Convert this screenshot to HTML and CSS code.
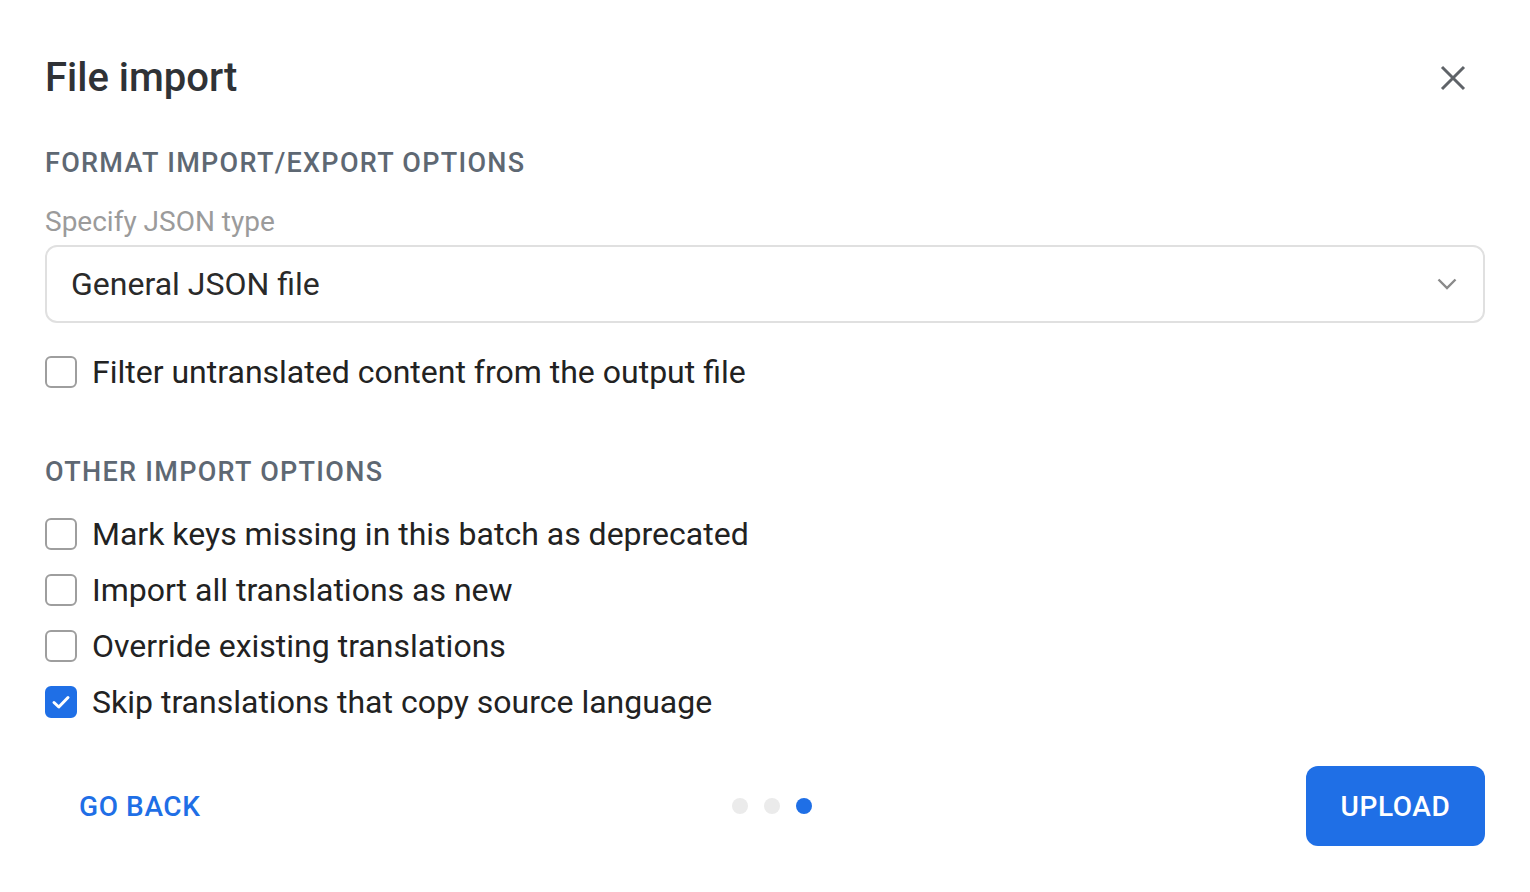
FILE: index.html
```html
<!DOCTYPE html>
<html lang="en">
<head>
<meta charset="utf-8">
<title>File import</title>
<link rel="stylesheet" href="styles.css">
</head>
<body>
<div class="dialog">
  <header class="dialog-header">
    <h1 class="title">File import</h1>
    <button class="close" aria-label="Close">
      <svg width="26" height="26" viewBox="0 0 26 26"><path d="M2 2 L24 24 M24 2 L2 24" stroke="#5f6368" stroke-width="3" fill="none"/></svg>
    </button>
  </header>

  <h2 class="section section-first">FORMAT IMPORT/EXPORT OPTIONS</h2>
  <div class="field-label">Specify JSON type</div>
  <div class="select">
    <span class="select-value">General JSON file</span>
    <svg class="chevron" width="20" height="12" viewBox="0 0 20 12"><path d="M1.5 1.5 L10 10 L18.5 1.5" stroke="#8a8a8a" stroke-width="2.4" fill="none"/></svg>
  </div>
  <label class="check-row check-single"><span class="box"></span><span class="check-text">Filter untranslated content from the output file</span></label>

  <h2 class="section section-second">OTHER IMPORT OPTIONS</h2>
  <div class="check-list">
    <label class="check-row"><span class="box"></span><span class="check-text">Mark keys missing in this batch as deprecated</span></label>
    <label class="check-row"><span class="box"></span><span class="check-text">Import all translations as new</span></label>
    <label class="check-row"><span class="box"></span><span class="check-text">Override existing translations</span></label>
    <label class="check-row"><span class="box box-checked"><svg width="32" height="32" viewBox="0 0 32 32"><path d="M9 16.5 L13.8 21 L23 11.5" stroke="#fff" stroke-width="3" fill="none" stroke-linecap="round" stroke-linejoin="round"/></svg></span><span class="check-text">Skip translations that copy source language</span></label>
  </div>

  <footer class="footer">
    <button class="back">GO BACK</button>
    <div class="dots"><span class="dot"></span><span class="dot"></span><span class="dot dot-active"></span></div>
    <button class="upload">UPLOAD</button>
  </footer>
</div>
</body>
</html>
```

FILE: styles.css
```css
html, body {
  margin: 0;
  padding: 0;
  background: #ffffff;
}
body {
  font-family: Roboto, "Liberation Sans", Arial, sans-serif;
  color: #212121;
}
.dialog {
  width: 1530px;
  height: 892px;
  box-sizing: border-box;
  padding: 50px 45px 0 45px;
  display: flex;
  flex-direction: column;
}
.dialog-header {
  display: flex;
  align-items: center;
  justify-content: space-between;
  height: 56px;
}
.title {
  margin: 0;
  font-size: 40px;
  font-weight: 500;
  color: #2f3236;
  line-height: 56px;
}
.close {
  width: 48px;
  height: 48px;
  margin-right: 8px;
  border: none;
  background: none;
  padding: 0;
  display: flex;
  align-items: center;
  justify-content: center;
  cursor: pointer;
}
.section {
  margin: 0;
  font-size: 27px;
  font-weight: 500;
  letter-spacing: 1.3px;
  line-height: 32px;
  color: #5e6873;
}
.section-first {
  margin-top: 41px;
}
.field-label {
  margin-top: 27px;
  font-size: 28px;
  line-height: 32px;
  color: #9b9b9b;
}
.select {
  margin-top: 7px;
  height: 78px;
  box-sizing: border-box;
  border: 2px solid #e0e0e0;
  border-radius: 12px;
  display: flex;
  align-items: center;
  justify-content: space-between;
  padding: 0 26px 0 24px;
}
.select-value {
  font-size: 32px;
  color: #2a2a2a;
}
.check-row {
  display: flex;
  align-items: center;
  height: 40px;
  gap: 15px;
}
.check-single {
  margin-top: 29px;
}
.box {
  width: 32px;
  height: 32px;
  box-sizing: border-box;
  border: 2px solid #9e9e9e;
  border-radius: 6px;
  flex: none;
  display: flex;
}
.box-checked {
  background: #1f6fe6;
  border-color: #1f6fe6;
}
.box-checked svg {
  margin: -2px;
}
.check-text {
  font-size: 32px;
  color: #222222;
}
.section-second {
  margin-top: 64px;
}
.check-list {
  margin-top: 26px;
  display: flex;
  flex-direction: column;
  gap: 16px;
}
.footer {
  margin-top: 44px;
  display: flex;
  align-items: center;
  justify-content: space-between;
  height: 80px;
}
.back {
  border: none;
  background: none;
  font-family: inherit;
  font-size: 28px;
  font-weight: 500;
  letter-spacing: 0.6px;
  color: #1f6fe6;
  padding: 0 34px;
  height: 80px;
}
.dots {
  display: flex;
  gap: 16px;
  margin-left: 4px;
}
.dot {
  width: 16px;
  height: 16px;
  border-radius: 50%;
  background: #ebebeb;
}
.dot-active {
  background: #1f6fe6;
}
.upload {
  width: 179px;
  height: 80px;
  border: none;
  border-radius: 12px;
  background: #1f6fe6;
  color: #ffffff;
  font-family: inherit;
  font-size: 28px;
  font-weight: 500;
  letter-spacing: 0.6px;
}
```
